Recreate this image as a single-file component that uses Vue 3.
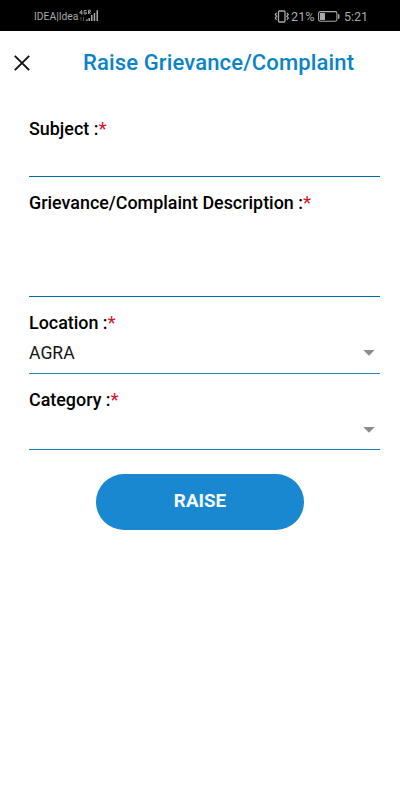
<script setup>
import { ref } from 'vue'

const subject = ref('')
const description = ref('')
const location = ref('AGRA')
const category = ref('')
</script>

<template>
  <div class="screen">
    <div class="status">
      <span class="carrier">IDEA|Idea</span>
      <svg class="signal" width="21" height="14" viewBox="0 0 21 14">
        <g fill="none" stroke="#aaa" stroke-width=".9">
          <path d="M2.7 5.5V1.2L.6 4H3.7M7.5 1.5H5.2V5H7.3V3.3H6.2M9.5 5V1.2H11.3V3H9.5M10.2 3L11.5 5" />
          <path stroke="#555" d="M2 8V12M4.5 8V12" />
        </g>
        <path fill="#aaa" d="M7.2 10.5h1.5V12H7.2zM9.5 9h1.5v3H9.5zM12 6h1.5v6H12zM14.7 4h1.5v8h-1.5zM17.5 1.3H19V12h-1.5z" />
      </svg>
      <span class="grow"></span>
      <svg class="vibrate" width="16" height="13" viewBox="0 0 16 13">
        <g fill="none" stroke="#aaa">
          <rect x="4.5" y="1" width="6.5" height="11" rx="1" stroke-width="1.3" />
          <path d="M2.7 3L1.2 4.5L2.7 6.2L1.2 8L2.7 10M12.8 3L14.3 4.5L12.8 6.2L14.3 8L12.8 10" stroke-width="1.2" />
        </g>
      </svg>
      <span class="percent">21%</span>
      <svg class="battery" width="22" height="11" viewBox="0 0 22 11">
        <rect x=".6" y=".6" width="18.3" height="9.6" rx="1.6" fill="none" stroke="#aaa" stroke-width="1.1" />
        <path fill="#aaa" d="M2 2h5v7H2zM20 3.2h1.4v4.6H20z" />
      </svg>
      <span class="clock">5:21</span>
    </div>

    <header class="bar">
      <svg class="close" width="16" height="16" viewBox="0 0 16 16">
        <path d="M.8.8L15.2 15.2M15.2.8L.8 15.2" stroke="#111" stroke-width="1.9" />
      </svg>
      <h1>Raise Grievance/Complaint</h1>
    </header>

    <form class="form" @submit.prevent>
      <div class="field subject">
        <label for="subject">Subject :<i>*</i></label>
        <input id="subject" v-model="subject" />
      </div>
      <div class="field description">
        <label for="description">Grievance/Complaint Description :<i>*</i></label>
        <textarea id="description" v-model="description"></textarea>
      </div>
      <div class="field location">
        <label>Location :<i>*</i></label>
        <div class="select">
          <span>{{ location }}</span>
          <svg width="12" height="6" viewBox="0 0 12 6"><path d="M.3 0H11.7L6 5.7z" fill="#8c8c8c" /></svg>
        </div>
      </div>
      <div class="field category">
        <label>Category :<i>*</i></label>
        <div class="select">
          <span>{{ category }}</span>
          <svg width="12" height="6" viewBox="0 0 12 6"><path d="M.3 0H11.7L6 5.7z" fill="#8c8c8c" /></svg>
        </div>
      </div>
      <button type="submit">RAISE</button>
    </form>
  </div>
</template>

<style>
body {
  margin: 0;
  background: #fff;
}
</style>

<style scoped>
.screen {
  width: 400px;
  height: 800px;
  background: #fff;
  font-family: Roboto, sans-serif;
  overflow: hidden;
}
.screen * {
  box-sizing: border-box;
}
svg {
  display: block;
  flex: none;
}
.status {
  height: 31px;
  background: #000;
  color: #aaa;
  display: flex;
  align-items: center;
  padding: 1px 32px 0 34px;
}
.carrier {
  font-size: 10.3px;
  width: 45px;
  white-space: nowrap;
}
.signal {
  margin-top: -1px;
}
.grow {
  flex: 1;
}
.percent {
  font-size: 12.7px;
  width: 27px;
  margin-left: 1px;
}
.clock {
  font-size: 12.5px;
  margin-left: 4px;
  width: 24px;
}
.bar {
  height: 63px;
  display: flex;
  align-items: center;
  padding-left: 14px;
}
.close {
  margin-right: 53px;
}
h1 {
  margin: 0;
  padding-bottom: 1px;
  font-size: 22px;
  letter-spacing: 0.14px;
  font-weight: 500;
  color: #0a84c6;
  white-space: nowrap;
}
.form {
  padding: 24px 20px 0 29px;
}
.field {
  display: flex;
  flex-direction: column;
  border-bottom: 1px solid #0268a8;
}
.subject {
  height: 59px;
}
.description {
  height: 120px;
  padding-top: 15px;
}
.location {
  height: 77px;
  padding-top: 15px;
  border-bottom-color: #2688bd;
}
.category {
  height: 76px;
  padding-top: 15px;
  border-bottom-color: #1580b8;
}
label {
  height: 22px;
  line-height: 22px;
  font-size: 17.9px;
  font-weight: 500;
  color: #000;
  white-space: nowrap;
}
label i {
  font-style: normal;
  font-weight: 400;
  font-size: 19px;
  line-height: 1;
  color: #d9152c;
}
input,
textarea {
  flex: 1;
  min-height: 0;
  border: 0;
  padding: 0;
  background: transparent;
  outline: 0;
  resize: none;
  font: 17px Roboto, sans-serif;
}
.select {
  flex: 1;
  display: flex;
  align-items: center;
  justify-content: space-between;
  padding: 0 5px 1px 0;
  font-size: 17.6px;
  color: #151515;
}
button {
  display: block;
  width: 208px;
  height: 56px;
  margin: 23.5px auto 0 67px;
  padding: 0 0 2px;
  border: 0;
  border-radius: 28px;
  background: #1a88d0;
  color: #f4fbff;
  font: 700 18.8px Roboto, sans-serif;
}
</style>
